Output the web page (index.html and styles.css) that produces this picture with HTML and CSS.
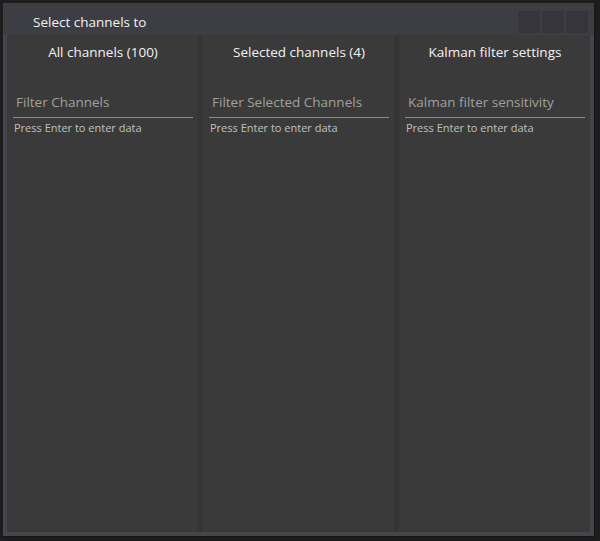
FILE: index.html
```html
<!DOCTYPE html>
<html>
<head>
<meta charset="utf-8">
<link rel="stylesheet" href="styles.css">
</head>
<body>
<div class="window">
  <div class="titlebar">
    <span class="title">Select channels to</span>
    <div class="buttons">
      <span class="btn"></span><span class="btn"></span><span class="btn"></span>
    </div>
  </div>
  <div class="content">
    <section class="panel">
      <h2 class="panel-title">All channels (100)</h2>
      <div class="field"><span class="placeholder">Filter Channels</span></div>
      <p class="hint">Press Enter to enter data</p>
    </section>
    <section class="panel">
      <h2 class="panel-title">Selected channels (4)</h2>
      <div class="field"><span class="placeholder">Filter Selected Channels</span></div>
      <p class="hint">Press Enter to enter data</p>
    </section>
    <section class="panel">
      <h2 class="panel-title">Kalman filter settings</h2>
      <div class="field"><span class="placeholder">Kalman filter sensitivity</span></div>
      <p class="hint">Press Enter to enter data</p>
    </section>
  </div>
</div>
</body>
</html>
```
FILE: styles.css
```css
html, body {
  margin: 0;
  padding: 0;
  background: #1d1d1d;
  width: 600px;
  height: 541px;
  overflow: hidden;
  font-family: "Open Sans", "Noto Sans", sans-serif;
}
.window {
  margin: 3px 0 0 3px;
  width: 591px;
  height: 533px;
  box-sizing: border-box;
  background: #45454d;
  padding: 0 4px 4px 4px;
  display: flex;
  flex-direction: column;
  box-shadow: 1px 1px 0 #151515;
}
.titlebar {
  height: 32px;
  margin: 0 -4px;
  padding: 0 6px 0 30px;
  background: #3d3d44;
  display: flex;
  align-items: center;
  justify-content: space-between;
}
.title {
  color: #f2f2f2;
  font-size: 13.5px;
  padding-top: 6px;
}
.buttons {
  display: flex;
  gap: 2px;
  padding-top: 6px;
}
.btn {
  width: 22px;
  height: 22px;
  background: #35353b;
}
.content {
  flex: 1;
  display: flex;
  gap: 5px;
  background: #353535;
}
.panel {
  flex: 1;
  background: #3a3a3a;
  padding: 0 5px 0 6px;
  display: flex;
  flex-direction: column;
}
.panel-title {
  margin: 0;
  padding-top: 8px;
  font-size: 13.5px;
  font-weight: normal;
  line-height: 18px;
  color: #f2f2f2;
  text-align: center;
}
.field {
  margin-top: 31px;
  padding: 0 0 6px 3px;
  border-bottom: 1px solid #8a8a8a;
  line-height: 18px;
}
.placeholder {
  font-size: 13.5px;
  color: #a0a0a0;
}
.hint {
  margin: 2px 0 0 1px;
  font-size: 11px;
  line-height: 16px;
  color: #c0c0c0;
}
```
